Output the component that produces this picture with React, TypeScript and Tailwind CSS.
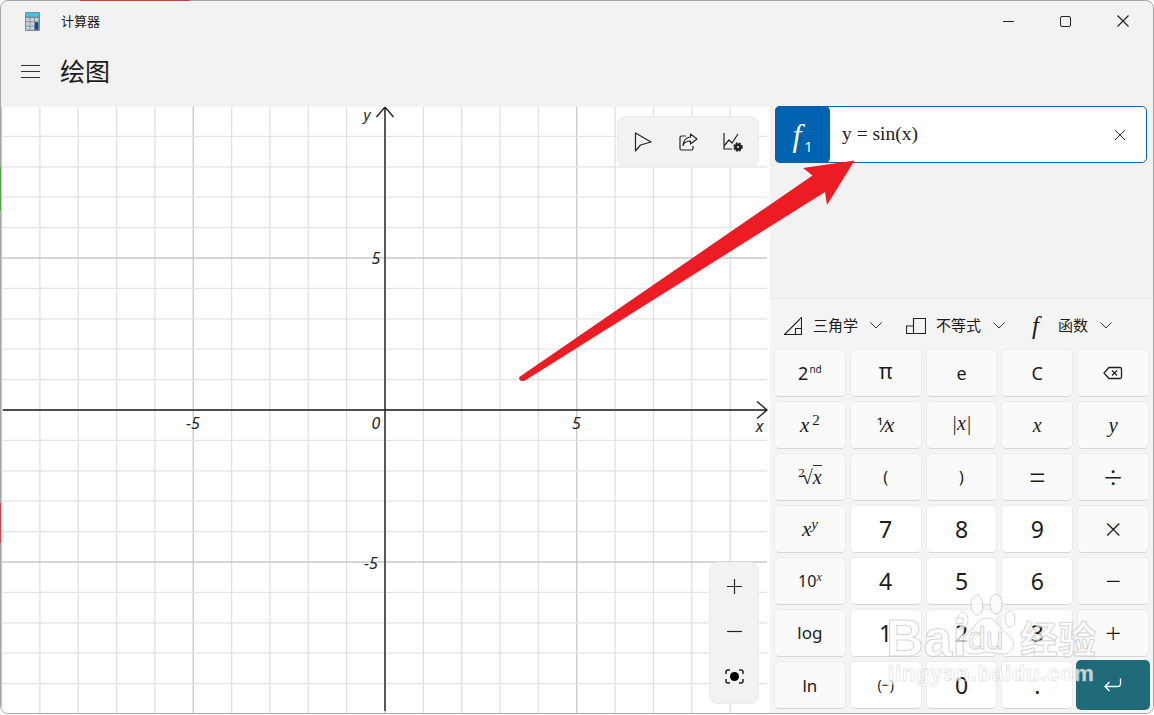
import type { ReactNode } from 'react'

const sans = 'font-["Noto_Sans","Noto_Sans_CJK_SC",sans-serif]'
const math = 'font-["Liberation_Serif",serif] italic'
const op = 'font-["Inter",sans-serif] text-[30px] font-extralight -mt-1'
const opWide = 'font-["Inter",sans-serif] text-[36px] font-extralight -mt-1'

const xLines = Array.from({ length: 20 }, (_, i) => 385 + (i - 10) * 38.35)
const yLines = Array.from({ length: 21 }, (_, i) => 410 + (i - 10) * 30.4)

type Key = { label: ReactNode; kind?: 'num' | 'fn' | 'enter'; text?: string }

const keys: Key[] = [
  { label: <span className="text-[18px]">2<sup className="text-[10px] -top-[7px] ml-px">nd</sup></span> },
  { label: <span className="text-[21px] -mt-1">π</span> },
  { label: <span className="text-[18px]">e</span> },
  { label: <span className="text-[18px]">C</span> },
  { label: <BackspaceIcon /> },

  { label: <span className={`${math} text-[21px]`}>x<sup className="text-[15px] not-italic ml-[3px] -top-[7px]">2</sup></span> },
  { label: <span className={`${math} text-[21px]`}><span className={`not-italic ${sans} text-[17px]`}>¹⁄</span>x</span> },
  { label: <span className={`${math} text-[20px] -mt-1`}>|x|</span> },
  { label: <span className={`${math} text-[20px]`}>x</span> },
  { label: <span className={`${math} text-[21px]`}>y</span> },

  { label: <span className={`${math} text-[20px]`}><sup className="-mr-[3px] text-[13px] not-italic -top-[7px]">2</sup><span className="not-italic">√</span><span className="border-t border-[#333] leading-[20px]">x</span></span> },
  { label: <span className="text-[16px]">(</span> },
  { label: <span className="text-[16px]">)</span> },
  { label: <span className={opWide}>=</span> },
  { label: <span className={opWide}>÷</span> },

  { label: <span className={`${math} text-[21px]`}>x<sup className="text-[15px] -top-[7px]">y</sup></span> },
  { label: '7', kind: 'num' },
  { label: '8', kind: 'num' },
  { label: '9', kind: 'num' },
  { label: <span className={op}>×</span> },

  { label: <span className="text-[16px]">10<sup className={`${math} text-[12px] -top-[6px]`}>x</sup></span> },
  { label: '4', kind: 'num' },
  { label: '5', kind: 'num' },
  { label: '6', kind: 'num' },
  { label: <span className={op}>−</span> },

  { label: <span className="text-[17px] -mt-[2px]">log</span> },
  { label: '1', kind: 'num' },
  { label: '2', kind: 'num' },
  { label: '3', kind: 'num' },
  { label: <span className={op}>+</span> },

  { label: <span className="text-[17px]">ln</span> },
  { label: <span className="text-[14px]">(−)</span>, kind: 'num' },
  { label: '0', kind: 'num' },
  { label: '.', kind: 'num' },
  { label: <EnterIcon />, kind: 'enter' },
]

function BackspaceIcon() {
  return (
    <svg width="20" height="16" viewBox="0 0 20 16" fill="none" stroke="#1f1f1f" strokeWidth="1.3">
      <path d="M6 2.5h11a1.5 1.5 0 0 1 1.5 1.5v8a1.5 1.5 0 0 1-1.5 1.5H6L1 8z" strokeLinejoin="round" />
      <path d="M9 5.5l5 5M14 5.5l-5 5" />
    </svg>
  )
}

function EnterIcon() {
  return (
    <svg width="18" height="14" viewBox="0 0 18 14" fill="none" stroke="#fff" strokeWidth="1.3">
      <path d="M16.5 0.5v5a3 3 0 0 1-3 3H1M5.5 4L1 8.5l4.5 4.5" />
    </svg>
  )
}

function Chevron() {
  return (
    <svg width="12" height="7" viewBox="0 0 12 7" fill="none" stroke="#333" strokeWidth="1">
      <path d="M0.5 0.5L6 6l5.5-5.5" />
    </svg>
  )
}

function CalcIcon() {
  return (
    <svg width="15" height="19" viewBox="0 0 15 19">
      <rect width="15" height="19" rx="1" fill="#7d8a96" />
      <rect x="1" y="1" width="13" height="3.5" fill="#35c6ec" />
      {[0, 1, 2].flatMap((c) =>
        [0, 1, 2].map((r) => (
          <rect key={`${c}-${r}`} x={1 + c * 4.4} y={6 + r * 4.2} width="3.6" height="3.4" fill="#c9d1d8" />
        )),
      )}
      <rect x="9.8" y="10.2" width="3.6" height="7.6" fill="#124a8c" />
    </svg>
  )
}

function Graph() {
  return (
    <svg width="768" height="606" viewBox="1 107 768 606" className="absolute inset-0">
      {xLines.map((x, i) => (
        <line key={i} x1={x} x2={x} y1="107" y2="713" stroke={i % 5 === 0 ? '#c8c8c8' : '#e0e0e0'} strokeWidth={1.3} />
      ))}
      {yLines.map((y, i) => (
        <line key={i} x1="2" x2="767" y1={y} y2={y} stroke={i % 5 === 0 ? '#c8c8c8' : '#e3e3e3'} strokeWidth={1.3} />
      ))}
      <g stroke="#222" strokeWidth="1.4" fill="none">
        <path d="M3 410H767M757 401.5L767 410l-10 8.5" />
        <path d="M385 711V107M376.500 117l8.500-10 8.500 10" />
      </g>
      <g fontFamily="Noto Sans, sans-serif" fontStyle="italic" fontSize="16" fill="#222" textAnchor="middle">
        <text x="193" y="429">−5</text>
        <text x="376" y="429">0</text>
        <text x="576.500" y="429">5</text>
        <text x="376" y="264">5</text>
        <text x="371" y="569">−5</text>
        <text x="759.500" y="432">x</text>
        <text x="367" y="120" fontSize="15">y</text>
      </g>
    </svg>
  )
}

function ToolBtn({ children }: { children: ReactNode }) {
  return <div className="flex h-[45px] w-[46px] items-center justify-center">{children}</div>
}

export default function App() {
  return (
    <div className={`relative h-[715px] w-[1154px] overflow-hidden bg-white text-[#1b1b1b] ${sans}`}>
      {/* bits of the desktop showing behind the window */}
      <div className="absolute left-[80px] top-0 h-px w-[110px] bg-[#c04040]" />
      <div className="absolute left-0 top-[167px] h-[44px] w-px bg-[#5aa050]" />
      <div className="absolute left-0 top-[503px] h-[40px] w-px bg-[#c84850]" />

      <div className="flex h-[714px] w-full flex-col overflow-hidden rounded-lg border border-[#a6a6a6] bg-[#f2f2f2]">
        <div className="flex h-[52px] shrink-0 items-start">
          <div className="ml-[24px] mt-[11px]">
            <CalcIcon />
          </div>
          <span className="ml-[21px] mt-[11px] text-[13px] leading-[18px]">计算器</span>
          <div className="ml-auto flex">
            <div className="flex h-[39px] w-[58px] items-end justify-center pb-[18px]">
              <div className="h-[1.5px] w-[11px] bg-[#222]" />
            </div>
            <div className="flex h-[39px] w-[56px] items-center justify-center pt-[1px]">
              <div className="h-[11px] w-[11px] rounded-[2px] border-[1.3px] border-[#222]" />
            </div>
            <div className="flex h-[39px] w-[60px] items-center justify-center pt-[1px]">
              <svg width="12" height="12" viewBox="0 0 12 12" stroke="#222" strokeWidth="1.2">
                <path d="M0.5 0.5l11 11M11.5 0.5l-11 11" />
              </svg>
            </div>
          </div>
        </div>

        <div className="flex h-[54px] shrink-0 items-start">
          <div className="ml-[20px] mt-[12px] flex w-[19px] flex-col gap-[5px]">
            <div className="h-px bg-[#333]" />
            <div className="h-px bg-[#333]" />
            <div className="h-px bg-[#333]" />
          </div>
          <h1 className="ml-[20px] mt-[1px] text-[25px] font-normal leading-[34px]">绘图</h1>
        </div>

        <div className="flex min-h-0 flex-1">
          <div className="relative w-[768px] shrink-0 bg-white">
            <Graph />
            <div className="absolute right-[10px] top-[9px] flex h-[52px] w-[142px] items-center rounded-lg border border-[#ececec] bg-[#f2f2f2] px-[3px]">
              <ToolBtn>
                <svg width="18" height="21" viewBox="0 0 18 21" fill="none" stroke="#222" strokeWidth="1.2">
                  <path d="M1.5 1v18l5-6 10.5-3z" strokeLinejoin="round" />
                </svg>
              </ToolBtn>
              <ToolBtn>
                <svg width="19" height="18" viewBox="0 0 19 18" fill="none" stroke="#222" strokeWidth="1.2">
                  <path d="M7 3H2.5A1.5 1.5 0 0 0 1 4.500V15.500A1.500 1.500 0 0 0 2.500 17h10a1.500 1.500 0 0 0 1.500-1.500V13" />
                  <path d="M11.500 1l6.500 5-6.500 5V8C8 8 5.500 9 4 12.500 4.500 7.500 7 4.500 11.500 4z" strokeLinejoin="round" />
                </svg>
              </ToolBtn>
              <ToolBtn>
                <svg width="20" height="19" viewBox="0 0 20 19" fill="none" stroke="#222" strokeWidth="1.2">
                  <path d="M1 0v16h8" />
                  <path d="M1 13l5-6 3 3 6-9" />
                  <circle cx="15" cy="14" r="3.500" fill="#222" strokeWidth="2.4" strokeDasharray="1.800 1" />
                  <circle cx="15" cy="14" r="1" fill="#f2f2f2" stroke="none" />
                </svg>
              </ToolBtn>
            </div>
            <div className="absolute bottom-[9px] right-[10px] flex h-[142px] w-[50px] flex-col items-center justify-center rounded-lg border border-[#ececec] bg-[#f2f2f2] pb-[3px]">
              <ToolBtn>
                <svg width="15" height="15" viewBox="0 0 15 15" stroke="#222" strokeWidth="1.2">
                  <path d="M7.500 0v15M0 7.500h15" />
                </svg>
              </ToolBtn>
              <ToolBtn>
                <svg width="15" height="3" viewBox="0 0 15 3" stroke="#222" strokeWidth="1.2">
                  <path d="M0 1.500h15" />
                </svg>
              </ToolBtn>
              <ToolBtn>
                <svg width="19" height="15" viewBox="0 0 19 15" fill="none" stroke="#222" strokeWidth="1.500">
                  <path d="M1 5V3a2 2 0 0 1 2-2h2M14 1h2a2 2 0 0 1 2 2v2M18 10v2a2 2 0 0 1-2 2h-2M5 14H3a2 2 0 0 1-2-2v-2" />
                  <circle cx="9.500" cy="7.500" r="4.500" fill="#000" stroke="none" />
                </svg>
              </ToolBtn>
            </div>
          </div>

          <div className="flex min-w-0 flex-1 flex-col border-l border-[#fafafa]">
            <div className="h-[192px] shrink-0 border-b border-[#e9e9e9] bg-[#f2f2f2] pl-[5px] pr-[6px]">
              <div className="-mt-px flex h-[57px] rounded-[5px] border border-[#0063b1] bg-white">
                <div className="-m-px flex h-[57px] w-[55px] shrink-0 items-center justify-center rounded-[5px] bg-[#0063b1] text-white">
                  <span className="font-['Liberation_Serif',serif] text-[32px] italic leading-none">f</span>
                  <span className="ml-[3px] mt-[25px] text-[14px] leading-none">1</span>
                </div>
                <span className="-mt-px ml-[13px] self-center font-['Liberation_Serif',serif] text-[19.5px] text-[#222]">y = sin(x)</span>
                <div className="ml-auto mr-[20px] self-center">
                  <svg width="12" height="12" viewBox="0 0 12 12" stroke="#333" strokeWidth="1">
                    <path d="M1 1l10 10M11 1L1 11" />
                  </svg>
                </div>
              </div>
            </div>

            <div className="flex min-h-0 flex-1 flex-col bg-[#f4f4f4]">
              <div className="flex h-[50px] shrink-0 items-center pl-[14px] pt-[3px] text-[15px] leading-none">
                <div className="flex items-center">
                  <svg width="18" height="18" viewBox="0 0 18 18" fill="none" stroke="#222" strokeWidth="1.100">
                    <path d="M0.500 17.500L17.500 0.500v17zM11.500 17.500v-6h6" />
                  </svg>
                  <span className="ml-[11px]">三角学</span>
                  <span className="ml-[12px]"><Chevron /></span>
                </div>
                <div className="ml-[24px] flex items-center">
                  <svg width="20" height="16" viewBox="0 0 20 16" fill="none" stroke="#222" strokeWidth="1.100">
                    <path d="M7.500 8V0.500h12v15H0.500V8H7.500v7.500" />
                  </svg>
                  <span className="ml-[10px]">不等式</span>
                  <span className="ml-[12px]"><Chevron /></span>
                </div>
                <div className="ml-[27px] flex items-center">
                  <span className="w-[14px] font-['Liberation_Serif',serif] text-[25px] italic">f</span>
                  <span className="ml-[12px]">函数</span>
                  <span className="ml-[12px]"><Chevron /></span>
                </div>
              </div>

              <div className="grid grid-cols-5 gap-[4px] px-[4px]">
                {keys.map((key, i) => (
                  <button
                    key={i}
                    className={
                      key.kind === 'enter'
                        ? '-m-px flex h-[50px] items-center justify-center rounded-[5px] bg-[#1f6a78]'
                        : key.kind === 'num'
                          ? 'flex h-[48px] items-center justify-center rounded-[5px] border border-[#ececec] border-b-[#d6d6d6] bg-white text-[23px] leading-none'
                          : 'flex h-[48px] items-center justify-center rounded-[5px] border border-[#ececec] border-b-[#d6d6d6] bg-[#fafafa] leading-none'
                    }
                  >
                    {key.label}
                  </button>
                ))}
              </div>
            </div>
          </div>
        </div>
      </div>

      {/* red annotation arrow */}
      <svg width="1154" height="715" viewBox="0 0 1154 715" className="pointer-events-none absolute inset-0">
        <path d="M520 376.500L812.500 175.500 803 168 854.500 160.500 827 205 825 192 525 380.500Q521 382 519.500 379.500 518.500 377.500 520 376.500z" fill="#ed1c24" />
      </svg>

      {/* watermark */}
      <div className="pointer-events-none absolute left-[886px] top-[592px] h-[100px] w-[210px] font-['Liberation_Sans',sans-serif] text-white opacity-75">
        <svg width="66" height="66" viewBox="0 0 66 66" className="absolute left-[69px] top-[0px]" fill="#fff" stroke="#c8c8c8">
          <ellipse cx="22" cy="13" rx="6" ry="10" />
          <ellipse cx="41" cy="12" rx="6" ry="10" />
          <ellipse cx="8" cy="28" rx="5" ry="8" />
          <ellipse cx="55" cy="27" rx="5" ry="8" />
          <path d="M32 26C22 26 20 36 12 42 4 48 6 62 18 62 24 62 28 60 32 60 36 60 42 62 48 62 60 62 62 48 52 42 44 36 42 26 32 26z" />
        </svg>
        <span className="absolute left-0 top-[20px] text-[52px] font-bold leading-none [-webkit-text-stroke:1px_#c8c8c8]">Bai</span>
        <span className="absolute left-[82px] top-[30px] text-[32px] leading-none [-webkit-text-stroke:1px_#c8c8c8]">du</span>
        <span className="absolute left-[134px] top-[26px] font-['Noto_Sans_CJK_SC',sans-serif] text-[38px] font-bold leading-none [-webkit-text-stroke:1px_#c8c8c8]">经验</span>
        <span className="absolute left-[2px] top-[71px] text-[22px] font-bold leading-none tracking-[0.8px] [-webkit-text-stroke:0.5px_#c8c8c8]">jingyan.baidu.com</span>
      </div>
    </div>
  )
}
